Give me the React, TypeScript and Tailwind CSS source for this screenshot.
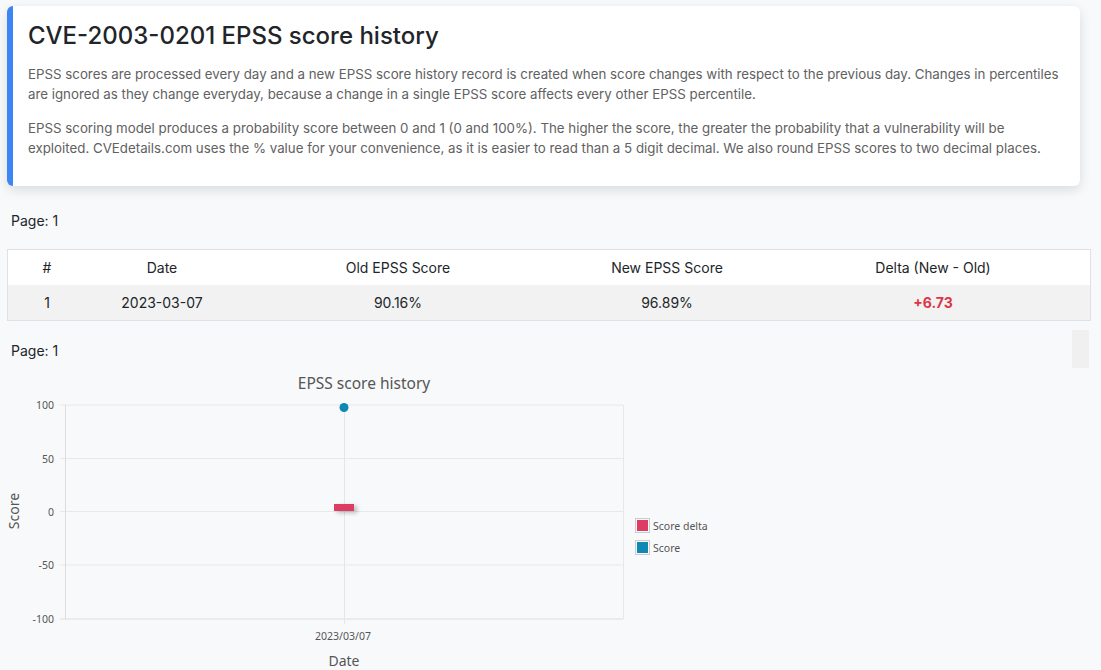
import React from 'react';

const rows = [
  { n: 1, date: '2023-03-07', oldScore: '90.16%', newScore: '96.89%', delta: '+6.73' },
];

// column widths of the history table
const cols = 'grid grid-cols-[78px_152px_320px_218px_1fr]';

function ScoreChart() {
  const font = '"Noto Sans", "DejaVu Sans", sans-serif';
  const grid = [35, 88.5, 141.5, 195, 249];
  const labels = ['100', '50', '0', '-50', '-100'];

  return (
    <svg width="740" height="300" viewBox="0 0 740 300" className="block mt-[2px]">
      <defs>
        <filter id="barShadow" x="-50%" y="-80%" width="200%" height="260%">
          <feDropShadow dx="3" dy="2" stdDeviation="2" floodColor="#000" floodOpacity="0.25" />
        </filter>
      </defs>
      <text x="364" y="19" textAnchor="middle" fontSize="15.5" fill="#555" fontFamily={font}>
        EPSS score history
      </text>

      {/* grid */}
      {grid.map((y, i) => (
        <g key={y}>
          <line x1="60" x2="623" y1={y} y2={y} stroke={i === 4 ? '#ddd' : '#e8e8e8'} strokeWidth="1" />
          <text x="54" y={y + 4} textAnchor="end" fontSize="10.5" fill="#555" fontFamily={font}>
            {labels[i]}
          </text>
        </g>
      ))}
      <line x1="65.5" x2="65.5" y1="35" y2="249" stroke="#ddd" />
      <line x1="623.5" x2="623.5" y1="35" y2="249" stroke="#e8e8e8" />
      <line x1="344.5" x2="344.5" y1="35" y2="254" stroke="#e6e6e6" />

      {/* delta bar */}
      <rect x="334" y="134" width="20" height="7" fill="#dd3d65" filter="url(#barShadow)" />
      {/* score point */}
      <circle cx="344" cy="37.5" r="4.5" fill="#0f88b3" />

      <text x="343" y="270" textAnchor="middle" fontSize="10.5" fill="#555" fontFamily={font}>
        2023/03/07
      </text>
      <text x="344" y="296" textAnchor="middle" fontSize="14" fill="#555" fontFamily={font}>
        Date
      </text>
      <text
        x="0"
        y="0"
        transform="translate(19 141) rotate(-90)"
        textAnchor="middle"
        fontSize="14"
        fill="#555"
        fontFamily={font}
      >
        Score
      </text>

      {/* legend */}
      <rect x="635.5" y="148.5" width="14" height="14" fill="none" stroke="#ccc" />
      <rect x="637" y="150" width="11" height="11" fill="#dd3d65" />
      <text x="653" y="160" fontSize="10.5" fill="#555" fontFamily={font}>
        Score delta
      </text>
      <rect x="635.5" y="170.5" width="14" height="14" fill="none" stroke="#ccc" />
      <rect x="637" y="172" width="11" height="11" fill="#0f88b3" />
      <text x="653" y="182" fontSize="10.5" fill="#555" fontFamily={font}>
        Score
      </text>
    </svg>
  );
}

export default function App() {
  return (
    <div
      className="min-h-[670px] bg-[#f8f9fa] text-[#212529] pt-[6px]"
      style={{ fontFamily: 'Inter, "Noto Sans", sans-serif' }}
    >
      {/* Intro card */}
      <div className="ml-[7px] w-[1073px] rounded-md bg-white border-l-[6px] border-[#3d85f7] shadow-[0_4px_12px_rgba(0,0,0,0.12)] pl-[15px] pr-[20px] pt-[15px] pb-[14px]">
        <h1 className="text-[24px] leading-[29px] font-medium mb-[14px]">
          CVE-2003-0201 EPSS score history
        </h1>
        <p className="text-[13.3px] leading-[20px] text-[#616161] mb-[14px]">
          EPSS scores are processed every day and a new EPSS score history record is created when score
          changes with respect to the previous day. Changes in percentiles are ignored as they change
          everyday, because a change in a single EPSS score affects every other EPSS percentile.
        </p>
        <p className="text-[13.3px] leading-[20px] text-[#616161] mb-[14px]">
          EPSS scoring model produces a probability score between 0 and 1 (0 and 100%). The higher the
          score, the greater the probability that a vulnerability will be exploited. CVEdetails.com uses
          the % value for your convenience, as it is easier to read than a 5 digit decimal. We also round
          EPSS scores to two decimal places.
        </p>
      </div>

      <div className="pl-[11px] pt-[25px] text-[14px] leading-[20px]">Page: 1</div>

      {/* History table */}
      <div className="ml-[7px] mt-[18px] w-[1084px] border border-[#dee2e6] text-[14px]">
        <div className={`${cols} bg-white h-[35px] items-center text-center`}>
          <div>#</div>
          <div>Date</div>
          <div>Old EPSS Score</div>
          <div>New EPSS Score</div>
          <div>Delta (New - Old)</div>
        </div>
        {rows.map(r => (
          <div key={r.n} className={`${cols} bg-[#f2f2f2] h-[35px] items-center text-center`}>
            <div>{r.n}</div>
            <div>{r.date}</div>
            <div>{r.oldScore}</div>
            <div>{r.newScore}</div>
            <div className="font-bold text-[#dc3545]">{r.delta}</div>
          </div>
        ))}
      </div>

      <div className="flex items-start justify-between pt-[9px] pr-[12px]">
        <div className="pl-[11px] pt-[11px] text-[14px] leading-[20px]">Page: 1</div>
        <div className="w-[17px] h-[38px] bg-[#f0f0f0]" />
      </div>

      <ScoreChart />
    </div>
  );
}
